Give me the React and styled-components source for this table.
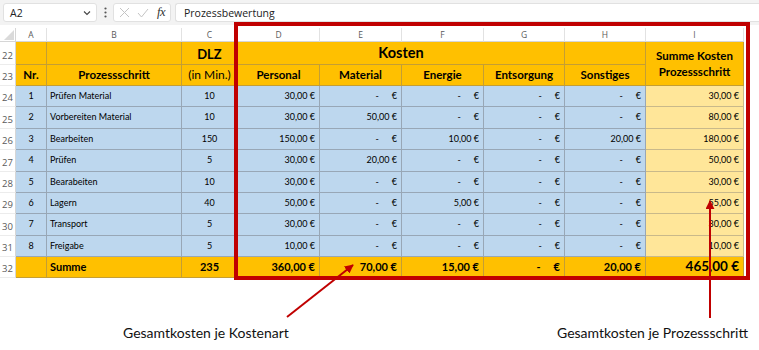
import React from "react";
import styled, { createGlobalStyle } from "styled-components";

const GlobalStyle = createGlobalStyle`
  html, body { margin: 0; padding: 0; background: #ffffff; }
  body { font-family: "Lato", "Liberation Sans", sans-serif; }
`;

const COLS = [16, 31, 135, 56, 82, 82, 82, 81, 81, 98];
const LETTERS = ["A", "B", "C", "D", "E", "F", "G", "H", "I"];

const YELLOW = "#FFC000";
const BLUE = "#BDD7EE";
const PALE = "#FFE699";
const RED = "#C00000";

const rows = [
  [1, "Prüfen Material", 10, "30,00", "-", "-", "-", "-", "30,00"],
  [2, "Vorbereiten Material", 10, "30,00", "50,00", "-", "-", "-", "80,00"],
  [3, "Bearbeiten", 150, "150,00", "-", "10,00", "-", "20,00", "180,00"],
  [4, "Prüfen", 5, "30,00", "20,00", "-", "-", "-", "50,00"],
  [5, "Bearabeiten", 10, "30,00", "-", "-", "-", "-", "30,00"],
  [6, "Lagern", 40, "50,00", "-", "5,00", "-", "-", "55,00"],
  [7, "Transport", 5, "30,00", "-", "-", "-", "-", "30,00"],
  [8, "Freigabe", 5, "10,00", "-", "-", "-", "-", "10,00"],
];

const Page = styled.div`
  position: relative;
  width: 759px;
  height: 350px;
  overflow: hidden;
  background: #ffffff;
`;

/* ---------- formula bar ---------- */
const FormulaBar = styled.div`
  display: flex;
  align-items: center;
  height: 25px;
  padding: 0 0 0 3px;
  background: #f3f3f3;
  margin-bottom: 3px;
  font-family: "Open Sans", "Noto Sans", sans-serif;
`;

const NameBox = styled.div`
  box-sizing: border-box;
  width: 94px;
  height: 19px;
  display: flex;
  align-items: center;
  justify-content: space-between;
  padding: 0 5px 0 6px;
  background: #ffffff;
  border: 1px solid #e1e1e1;
  border-radius: 3px;
  font-size: 10.5px;
  color: #222;
`;

const Dots = styled.div`
  width: 16px;
  display: flex;
  justify-content: center;
`;

const FxBox = styled.div`
  box-sizing: border-box;
  width: 58px;
  height: 19px;
  display: flex;
  align-items: center;
  justify-content: space-between;
  padding: 0 5px;
  background: #ffffff;
  border: 1px solid #e1e1e1;
  border-radius: 3px;
`;

const FxText = styled.span`
  font-family: "Liberation Serif", "DejaVu Serif", serif;
  font-style: italic;
  font-size: 12.5px;
  color: #333;
  letter-spacing: -0.5px;
`;

const FormulaInput = styled.div`
  box-sizing: border-box;
  flex: 1;
  height: 19px;
  margin-left: 4px;
  display: flex;
  align-items: center;
  padding-left: 8px;
  background: #ffffff;
  border: 1px solid #e1e1e1;
  border-right: none;
  border-radius: 3px 0 0 3px;
  font-size: 10.5px;
  color: #222;
`;

/* ---------- sheet grid ---------- */
const Sheet = styled.div`
  display: grid;
  grid-template-columns: ${COLS.map((c) => c + "px").join(" ")};
  grid-template-rows: 14px 23px 21px repeat(8, 21.375px) 21px;
`;

const Corner = styled.div`
  background: #ffffff;
  border-bottom: 1px solid #d6d6d6;
  border-right: 1px solid #d6d6d6;
  box-sizing: border-box;
  display: flex;
  align-items: flex-end;
  justify-content: flex-end;
  padding: 0 1px 1px 0;
`;

const ColHead = styled.div`
  box-sizing: border-box;
  background: #ffffff;
  border-bottom: 1px solid #d6d6d6;
  border-right: 1px solid #e2e2e2;
  display: flex;
  align-items: center;
  justify-content: center;
  font-family: "Open Sans", "Noto Sans", sans-serif;
  font-size: 8.5px;
  color: #5a5a5a;
`;

const RowHead = styled.div`
  box-sizing: border-box;
  background: #ffffff;
  border-right: 1px solid #d6d6d6;
  border-bottom: 1px solid #ececec;
  display: flex;
  align-items: flex-end;
  justify-content: center;
  padding-bottom: 2px;
  font-family: "Open Sans", "Noto Sans", sans-serif;
  font-size: 9.5px;
  color: #5a5a5a;
  grid-column: 1;
`;

const Cell = styled.div`
  box-sizing: border-box;
  min-width: 0;
  overflow: hidden;
  white-space: nowrap;
  display: flex;
  align-items: ${(p) => p.$valign || "center"};
  justify-content: ${(p) =>
    p.$align === "left" ? "flex-start" : p.$align === "right" ? "flex-end" : "center"};
  padding: ${(p) => (p.$align === "left" ? "0 0 0 3px" : p.$align === "right" ? "0 4px 0 0" : "0")};
  background: ${(p) => p.$bg};
  border-right: 1px solid ${(p) => p.$line};
  border-bottom: 1px solid ${(p) => p.$line};
  grid-column: ${(p) => p.$col};
  grid-row: ${(p) => p.$row};
  font-size: ${(p) => p.$size || 9}px;
  font-weight: ${(p) => (p.$bold ? 700 : 400)};
  color: #000;
  line-height: 1.15;
  text-align: center;
`;

const HeadStack = styled.div`
  display: flex;
  flex-direction: column;
  align-items: center;
  gap: 3px;
`;

const Dash = styled.span`
  margin-right: ${(p) => p.$gap}px;
`;

const Money = ({ v, gap = 12 }) =>
  v === "-" ? (
    <>
      <Dash $gap={gap}>-</Dash>€
    </>
  ) : (
    <>{v} €</>
  );

/* ---------- annotations ---------- */
const Frame = styled.div`
  position: absolute;
  left: 234px;
  top: 22px;
  width: 516px;
  height: 258px;
  box-sizing: border-box;
  border: 4px solid ${RED};
  pointer-events: none;
`;

const ArrowLayer = styled.svg`
  position: absolute;
  left: 0;
  top: 0;
  pointer-events: none;
`;

const Notes = styled.div`
  display: flex;
  justify-content: space-between;
  padding: 0 11px 0 123px;
  margin-top: 47px;
  font-family: "Lato", "Liberation Sans", sans-serif;
  font-size: 14px;
  line-height: 16px;
  color: #111;
`;

const lineBlue = "#98a7b6";
const lineYellow = "#c49e34";
const linePale = "#c9b98a";

export default function App() {
  const dataRowStart = 4; // grid row of sheet row 24
  return (
    <Page>
      <GlobalStyle />
      <FormulaBar>
        <NameBox>
          <span>A2</span>
          <svg width="8" height="6" viewBox="0 0 8 6">
            <path d="M1 1.5 L4 4.5 L7 1.5" fill="none" stroke="#444" strokeWidth="1.1" />
          </svg>
        </NameBox>
        <Dots>
          <svg width="3" height="11" viewBox="0 0 3 11">
            <circle cx="1.5" cy="1.5" r="1.1" fill="#555" />
            <circle cx="1.5" cy="5.5" r="1.1" fill="#555" />
            <circle cx="1.5" cy="9.5" r="1.1" fill="#555" />
          </svg>
        </Dots>
        <FxBox>
          <svg width="11" height="11" viewBox="0 0 11 11">
            <path d="M1 1 L10 10 M10 1 L1 10" stroke="#c4c4c4" strokeWidth="1" fill="none" />
          </svg>
          <svg width="12" height="10" viewBox="0 0 12 10">
            <path d="M1 5 L4.5 9 L11 1" stroke="#c4c4c4" strokeWidth="1" fill="none" />
          </svg>
          <FxText>fx</FxText>
        </FxBox>
        <FormulaInput>Prozessbewertung</FormulaInput>
      </FormulaBar>

      <Sheet>
        <Corner>
          <svg width="10" height="10" viewBox="0 0 10 10">
            <path d="M10 0 L10 10 L0 10 Z" fill="#dadada" />
          </svg>
        </Corner>
        {LETTERS.map((l) => (
          <ColHead key={l}>{l}</ColHead>
        ))}

        {/* header rows 22 and 23 */}
        <RowHead style={{ gridRow: 2 }}>22</RowHead>
        <RowHead style={{ gridRow: 3 }}>23</RowHead>

        <Cell $bg={YELLOW} $line={lineYellow} $col="2" $row="2" />
        <Cell $bg={YELLOW} $line={lineYellow} $col="3" $row="2" />
        <Cell $bg={YELLOW} $line={lineYellow} $col="4" $row="2" $bold $size={13} $valign="flex-end">
          <span style={{ paddingBottom: 2 }}>DLZ</span>
        </Cell>
        <Cell $bg={YELLOW} $line={lineYellow} $col="5 / 9" $row="2" $bold $size={14.5}>
          Kosten
        </Cell>
        <Cell $bg={YELLOW} $line={lineYellow} $col="9" $row="2" />
        <Cell $bg={YELLOW} $line={lineYellow} $col="10" $row="2 / 4" $bold $size={11.5}>
          <HeadStack>
            <span>Summe Kosten</span>
            <span>Prozessschritt</span>
          </HeadStack>
        </Cell>

        <Cell $bg={YELLOW} $line={lineYellow} $col="2" $row="3" $bold $size={11.5}>Nr.</Cell>
        <Cell $bg={YELLOW} $line={lineYellow} $col="3" $row="3" $bold $size={11.5}>Prozessschritt</Cell>
        <Cell $bg={YELLOW} $line={lineYellow} $col="4" $row="3" $size={12}>(in Min.)</Cell>
        {["Personal", "Material", "Energie", "Entsorgung", "Sonstiges"].map((h, i) => (
          <Cell key={h} $bg={YELLOW} $line={lineYellow} $col={String(5 + i)} $row="3" $bold $size={11.5}>
            {h}
          </Cell>
        ))}

        {/* data rows 24-31 */}
        {rows.map((r, i) => {
          const gr = String(dataRowStart + i);
          return (
            <React.Fragment key={r[0]}>
              <RowHead style={{ gridRow: gr }}>{24 + i}</RowHead>
              <Cell $bg={BLUE} $line={lineBlue} $col="2" $row={gr}>{r[0]}</Cell>
              <Cell $bg={BLUE} $line={lineBlue} $col="3" $row={gr} $align="left">{r[1]}</Cell>
              <Cell $bg={BLUE} $line={lineBlue} $col="4" $row={gr}>{r[2]}</Cell>
              {r.slice(3, 8).map((v, k) => (
                <Cell key={k} $bg={BLUE} $line={lineBlue} $col={String(5 + k)} $row={gr} $align="right">
                  <Money v={v} gap={13} />
                </Cell>
              ))}
              <Cell $bg={PALE} $line={linePale} $col="10" $row={gr} $align="right">
                <Money v={r[8]} />
              </Cell>
            </React.Fragment>
          );
        })}

        {/* totals row 32 */}
        <RowHead style={{ gridRow: 12 }}>32</RowHead>
        <Cell $bg={YELLOW} $line={lineYellow} $col="2" $row="12" />
        <Cell $bg={YELLOW} $line={lineYellow} $col="3" $row="12" $align="left" $bold $size={11}>Summe</Cell>
        <Cell $bg={YELLOW} $line={lineYellow} $col="4" $row="12" $bold $size={11}>235</Cell>
        {["360,00", "70,00", "15,00", "-", "20,00"].map((v, k) => (
          <Cell key={k} $bg={YELLOW} $line={lineYellow} $col={String(5 + k)} $row="12" $align="right" $bold $size={11}>
            <Money v={v} gap={13} />
          </Cell>
        ))}
        <Cell $bg={YELLOW} $line={lineYellow} $col="10" $row="12" $align="right" $bold $size={13.5}>
          465,00 €
        </Cell>
      </Sheet>

      <Notes>
        <span>Gesamtkosten je Kostenart</span>
        <span>Gesamtkosten je Prozessschritt</span>
      </Notes>

      <Frame />
      <ArrowLayer width="759" height="350" viewBox="0 0 759 350">
        <defs>
          <marker id="tip" viewBox="0 0 10 10" refX="9" refY="5" markerWidth="4.5" markerHeight="4.5" orient="auto">
            <path d="M0 0 L10 5 L0 10 Z" fill={RED} />
          </marker>
        </defs>
        <line x1="287" y1="317" x2="353" y2="265" stroke={RED} strokeWidth="2" markerEnd="url(#tip)" />
        <line x1="710" y1="318" x2="710" y2="201" stroke={RED} strokeWidth="2" markerEnd="url(#tip)" />
      </ArrowLayer>
    </Page>
  );
}
